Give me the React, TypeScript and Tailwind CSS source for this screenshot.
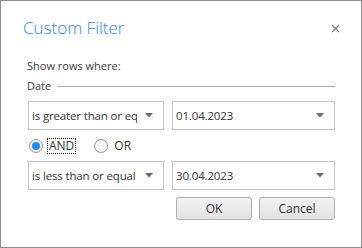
import React from 'react';

const font = { fontFamily: '"Segoe UI", "Open Sans", "Liberation Sans", sans-serif' };

function Arrow() {
  return (
    <svg width="8" height="5" viewBox="0 0 8 5" className="shrink-0">
      <path d="M0 0 H8 L4 4.5 Z" fill="#6a6a6a" />
    </svg>
  );
}

function Combo({ text, w }: { text: string; w: string }) {
  return (
    <div className={`${w} h-[29px] flex items-center border border-[#c4c4c4] bg-white`}>
      <div className="flex-1 overflow-hidden whitespace-nowrap pl-[3px] text-[11.5px] tracking-[-0.15px] text-[#333]">
        {text}
      </div>
      <div className="pl-[8px] pr-[10px]">
        <Arrow />
      </div>
    </div>
  );
}

function Radio({ checked, label, focus }: { checked?: boolean; label: string; focus?: boolean }) {
  return (
    <div className="flex items-center gap-[5px]">
      <div className="w-[14px] h-[14px] rounded-full border border-[#9a9a9a] bg-[#f4f4f4] flex items-center justify-center">
        {checked && <div className="w-[8px] h-[8px] rounded-full bg-[#1a91f0]" />}
      </div>
      <span
        className={`text-[12px] text-[#333] leading-[14px] px-[1px] ${focus ? 'outline outline-1 outline-dotted outline-[#222]' : ''}`}
      >
        {label}
      </span>
    </div>
  );
}

export default function App() {
  return (
    <div style={font} className="w-[362px] h-[248px] bg-white border border-[#8f8f8f] flex flex-col">
      {/* header */}
      <div className="flex items-center justify-between pl-[22px] pr-[21px] pt-[14px] h-[40px]">
        <span className="text-[17px] font-light text-[#1f8ad9] leading-[24px]">Custom Filter</span>
        <svg width="9" height="9" viewBox="0 0 9 9">
          <path d="M1 1 L8 8 M8 1 L1 8" stroke="#8a8a8a" strokeWidth="1.4" />
        </svg>
      </div>

      <div className="pl-[26px] pr-[26px] flex flex-col">
        <div className="mt-[18px] text-[11px] text-[#3a3a3a] leading-[14px]">Show rows where:</div>
        <div className="mt-[6px] flex items-center gap-[7px]">
          <span className="text-[11px] text-[#3a3a3a] leading-[14px]">Date</span>
          <div className="flex-1 h-px bg-[#a9a9a9]" />
        </div>

        <div className="mt-[8px] flex gap-[8px] pl-[1px]">
          <Combo text="is greater than or equal to" w="w-[136px]" />
          <Combo text="01.04.2023" w="w-[163px]" />
        </div>

        <div className="mt-[4px] h-[24px] flex items-center gap-[19px] pl-[2px]">
          <Radio checked label="AND" focus />
          <Radio label="OR" />
        </div>

        <div className="mt-[3px] flex gap-[8px] pl-[1px]">
          <Combo text="is less than or equal to" w="w-[136px]" />
          <Combo text="30.04.2023" w="w-[163px]" />
        </div>

        <div className="mt-[7px] flex justify-end gap-[7px]">
          <button className="w-[76px] h-[23px] rounded-[3px] border border-[#adadad] bg-gradient-to-b from-[#f2f2f2] to-[#e2e2e2] text-[12px] text-[#333]">
            OK
          </button>
          <button className="w-[76px] h-[23px] rounded-[3px] border border-[#adadad] bg-gradient-to-b from-[#f2f2f2] to-[#e2e2e2] text-[12px] text-[#333]">
            Cancel
          </button>
        </div>
      </div>
    </div>
  );
}
